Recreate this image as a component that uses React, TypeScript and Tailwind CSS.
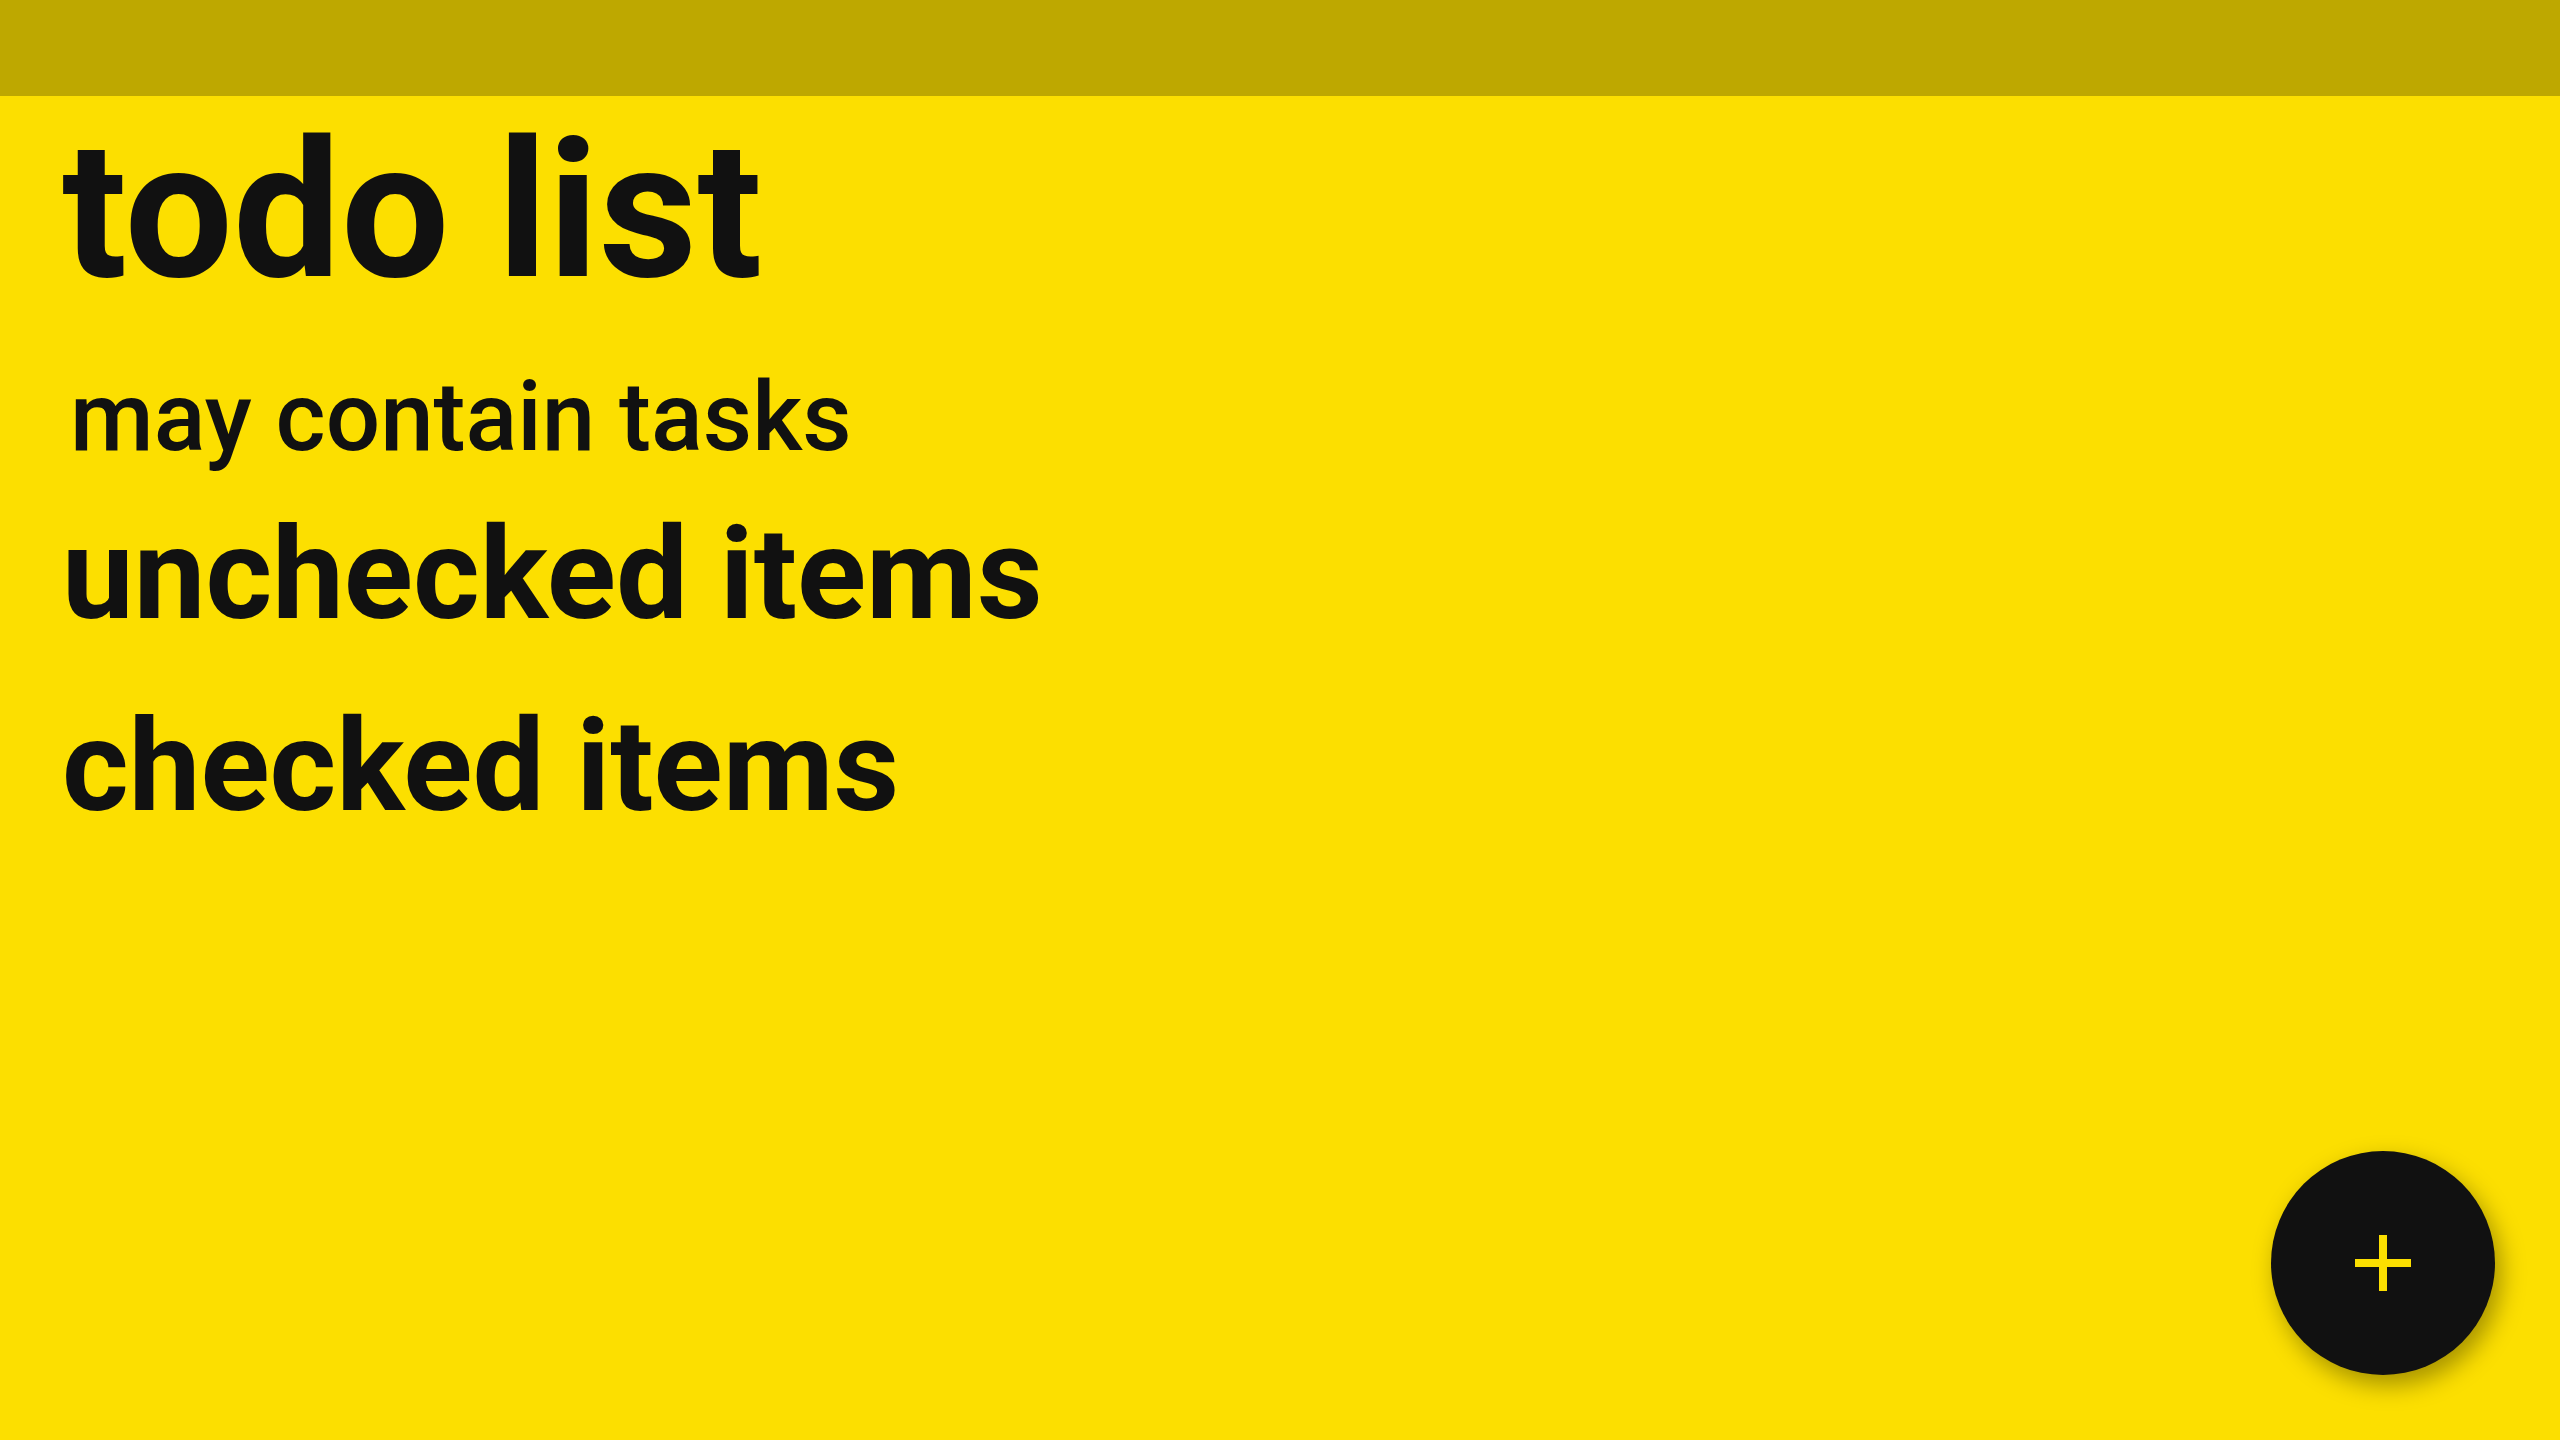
export default function App() {
  return (
    <div className="relative flex h-screen w-full flex-col overflow-hidden bg-[#fcdf00] font-['Roboto',sans-serif] text-[#111111]">
      <header className="h-[96px] w-full shrink-0 bg-[#bea800]" />
      <main className="flex flex-col px-[62px]">
        <h1 className="mt-[19px] text-[192px] font-bold leading-none">todo list</h1>
        <p className="mt-[62px] pl-[8px] text-[96px] font-medium leading-none">may contain tasks</p>
        <h2 className="mt-[45px] text-[128px] font-bold leading-none">unchecked items</h2>
        <h2 className="mt-[64px] text-[128px] font-bold leading-none">checked items</h2>
      </main>
      <button
        type="button"
        aria-label="add"
        className="absolute bottom-[65px] right-[65px] flex h-[224px] w-[224px] items-center justify-center rounded-full bg-[#111111] shadow-[6px_10px_24px_rgba(0,0,0,0.35)]"
      >
        <svg width="56" height="56" viewBox="0 0 56 56" fill="none">
          <rect x="24" y="0" width="8" height="56" fill="#fcdf00" />
          <rect x="0" y="24" width="56" height="8" fill="#fcdf00" />
        </svg>
      </button>
    </div>
  );
}
